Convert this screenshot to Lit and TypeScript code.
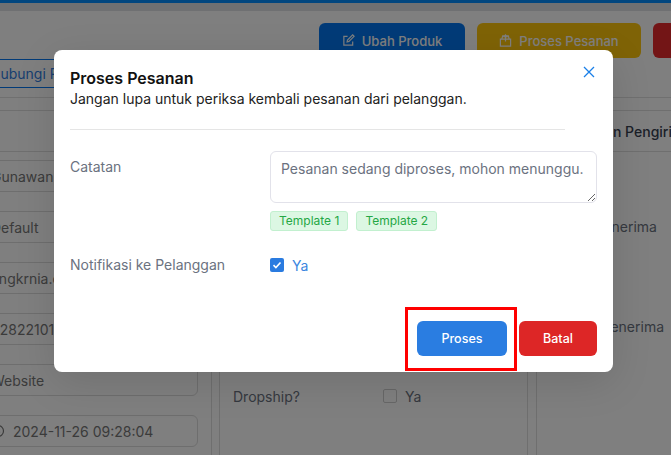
import { LitElement, html, css } from "lit";
import { customElement } from "lit/decorators.js";

@customElement("app-root")
export class AppRoot extends LitElement {
  static styles = css`
    :host {
      display: block;
      position: relative;
      width: 671px;
      height: 455px;
      overflow: hidden;
      background: #fff;
      font-family: Inter, "Liberation Sans", sans-serif;
      font-size: 14px;
      color: #6b7280;
    }
    * { box-sizing: border-box; }
    .topbar { height: 11px; border-top: 3px solid #028cff; background: #dfe0e4; }
    .actions { display: flex; gap: 12px; padding: 12px 0 0 319px; width: 1000px; }
    .act {
      height: 35px; border-radius: 6px; color: #fff; display: flex; align-items: center;
      justify-content: center; gap: 7px; font-size: 13px; font-weight: 500; flex: none;
    }
    .act svg { width: 13px; height: 13px; fill: none; stroke: #fff; stroke-width: 1.3; }
    .blue { width: 146px; background: #0477f0; }
    .yellow { width: 164px; background: #ffc60c; }
    .red { width: 160px; background: #e62a2c; }
    .tabs { display: flex; margin: 1px 0 0 -26px; height: 29px; }
    .tab {
      padding: 0 16px; display: flex; align-items: center; color: #2f7de0;
      border-top: 1px solid #0477f0; border-bottom: 1px solid #0477f0; white-space: nowrap;
    }
    .tabrule { margin-top: 9px; border-top: 1px solid #e0e0e0; height: 13px; }
    .cols { display: flex; margin-left: -40px; }
    .card { flex: none; height: 400px; border: 1px solid #dedede; border-bottom: 0; }
    .c1 { width: 252px; margin-right: 7px; }
    .c2 { width: 309px; margin-right: 8px; padding: 275px 13px 0; }
    .c3 { width: 300px; }
    .head {
      height: 41px; padding: 0 15px; display: flex; align-items: center;
      border-bottom: 1px solid #dedede; font-weight: 500; color: #374151; white-space: nowrap;
    }
    .fields { display: flex; flex-direction: column; gap: 19px; padding: 8px 13px 0 19px; }
    .field {
      height: 32px; border: 1px solid #dcdcdc; border-radius: 6px; padding: 0 10px;
      display: flex; align-items: center; gap: 8px; white-space: nowrap; overflow: hidden; color: #777;
    }
    .field svg { flex: none; width: 14px; height: 14px; fill: none; stroke: #777; stroke-width: 1.2; }
    .drop { display: flex; align-items: center; height: 20px; }
    .drop .lbl { width: 150px; }
    .box { width: 14px; height: 14px; border: 1px solid #cfcfcf; border-radius: 2px; margin-right: 8px; }
    .rcv { padding: 65px 15px 0; display: flex; flex-direction: column; gap: 80px; }
    .rcv div { height: 20px; line-height: 20px; white-space: nowrap; }

    .overlay { position: absolute; inset: 0; background: rgba(0, 0, 0, 0.5); padding: 50px 0 0 54px; }
    .modal {
      position: relative; width: 559px; height: 322px; background: #fff; border-radius: 8px;
      padding: 16px 16px 16px; box-shadow: 0 10px 40px rgba(0, 0, 0, 0.12);
    }
    .title { font-size: 16px; font-weight: 600; line-height: 24px; margin-top: 0; color: #111; }
    .sub { line-height: 20px; color: #222; margin-top: -1px; }
    .close {
      position: absolute; top: 16px; right: 18px; width: 12px; height: 12px;
    }
    .close svg { display: block; width: 12px; height: 12px; stroke: #1a7fe8; stroke-width: 1.3; fill: none; }
    hr { border: 0; border-top: 1px solid #e5e5e5; margin: 20px 32px 21px 0; }
    .row { display: grid; grid-template-columns: 200px 327px; }
    .rlabel { line-height: 20px; color: #6b7280; padding-top: 6px; }
    textarea {
      display: block; width: 327px; height: 52px; border: 1px solid #e2e2ea; border-radius: 6px;
      padding: 7px 10px; font: 14px/20px Inter, "Liberation Sans", sans-serif; color: #6b7280;
      letter-spacing: 0; outline: none; resize: vertical; overflow: hidden;
    }
    .tags { display: flex; gap: 8px; margin-top: 8px; }
    .tag {
      height: 20px; padding: 0 8px; border: 1px solid #c2f0cf; background: #dcf7e3; border-radius: 3px;
      color: #25a745; font-size: 12px; line-height: 18px;
    }
    .notif { margin-top: 24px; align-items: center; }
    .notif .rlabel { padding: 0; }
    .check { display: flex; align-items: center; gap: 8px; color: #3b86e0; height: 20px; }
    .tick { width: 14px; height: 14px; border-radius: 2px; background: #2a7be0; display: flex; }
    .tick svg { width: 14px; height: 14px; fill: none; stroke: #fff; stroke-width: 1.6; }
    .foot { position: absolute; right: 16px; bottom: 16px; display: flex; gap: 12px; }
    .btn {
      height: 35px; border-radius: 6px; display: flex; align-items: center; justify-content: center;
      color: #fff; font-size: 12.5px; font-weight: 500;
    }
    .go { width: 90px; background: #2a7de1; }
    .no { width: 78px; background: #dd2626; }
    .mark { position: absolute; left: 351px; top: 257px; width: 112px; height: 64px; border: 3px solid #f00; }
  `;

  render() {
    return html`
      <div class="topbar"></div>
      <div class="actions">
        <div class="act blue">
          <svg viewBox="0 0 14 14"><path d="M6 2.5H2v9.5h9.500V8M5.500 8.500l.4-2L11.500 1l1.500 1.500L7.500 8z" /></svg>
          Ubah Produk
        </div>
        <div class="act yellow">
          <svg viewBox="0 0 14 14"><path d="M1.500 5.500h11V13h-11zM3 5.500 4 2h6l1 3.500M7 1v7M5 3.500 7 1l2 2.500" /></svg>
          Proses Pesanan
        </div>
        <div class="act red">Batalkan Pesanan</div>
      </div>
      <div class="tabs"><div class="tab">Hubungi Pelanggan</div></div>
      <div class="tabrule"></div>
      <div class="cols">
        <div class="card c1">
          <div class="head"></div>
          <div class="fields">
            <div class="field">Gunawan</div>
            <div class="field">Default</div>
            <div class="field">angkrnia.com</div>
            <div class="field">6282210155</div>
            <div class="field">Website</div>
            <div class="field">
              <svg viewBox="0 0 14 14"><circle cx="7" cy="7" r="5.500" /><path d="M7 4v3l2 1.500" /></svg>
              2024-11-26 09:28:04
            </div>
          </div>
        </div>
        <div class="card c2">
          <div class="drop"><span class="lbl">Dropship?</span><span class="box"></span><span>Ya</span></div>
        </div>
        <div class="card c3">
          <div class="head">Ringkasan Pengiriman</div>
          <div class="rcv"><div>Nama Penerima</div><div>Alamat Penerima</div></div>
        </div>
      </div>

      <div class="overlay">
        <div class="modal">
          <div class="title">Proses Pesanan</div>
          <div class="sub">Jangan lupa untuk periksa kembali pesanan dari pelanggan.</div>
          <div class="close"><svg viewBox="0 0 12 12"><path d="M1 1l10 10M11 1 1 11" /></svg></div>
          <hr />
          <div class="row">
            <div class="rlabel">Catatan</div>
            <div>
              <textarea spellcheck="false">Pesanan sedang diproses, mohon menunggu.</textarea>
              <div class="tags"><span class="tag">Template 1</span><span class="tag">Template 2</span></div>
            </div>
          </div>
          <div class="row notif">
            <div class="rlabel">Notifikasi ke Pelanggan</div>
            <div class="check">
              <span class="tick"><svg viewBox="0 0 14 14"><path d="M3.500 7.200l2.400 2.300 4.600-5" /></svg></span>
              Ya
            </div>
          </div>
          <div class="foot">
            <div class="btn go">Proses</div>
            <div class="btn no">Batal</div>
          </div>
          <div class="mark"></div>
        </div>
      </div>
    `;
  }
}
